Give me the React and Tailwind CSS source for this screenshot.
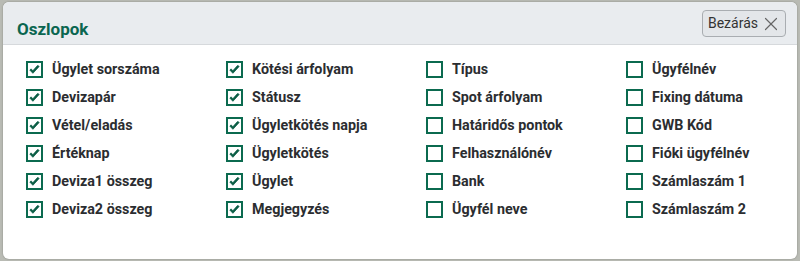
import { X } from 'lucide-react'

const columns = [
  [
    { label: 'Ügylet sorszáma', on: true },
    { label: 'Devizapár', on: true },
    { label: 'Vétel/eladás', on: true },
    { label: 'Értéknap', on: true },
    { label: 'Deviza1 összeg', on: true },
    { label: 'Deviza2 összeg', on: true },
  ],
  [
    { label: 'Kötési árfolyam', on: true },
    { label: 'Státusz', on: true },
    { label: 'Ügyletkötés napja', on: true },
    { label: 'Ügyletkötés', on: true },
    { label: 'Ügylet', on: true },
    { label: 'Megjegyzés', on: true },
  ],
  [
    { label: 'Típus', on: false },
    { label: 'Spot árfolyam', on: false },
    { label: 'Határidős pontok', on: false },
    { label: 'Felhasználónév', on: false },
    { label: 'Bank', on: false },
    { label: 'Ügyfél neve', on: false },
  ],
  [
    { label: 'Ügyfélnév', on: false },
    { label: 'Fixing dátuma', on: false },
    { label: 'GWB Kód', on: false },
    { label: 'Fióki ügyfélnév', on: false },
    { label: 'Számlaszám 1', on: false },
    { label: 'Számlaszám 2', on: false },
  ],
]

function Box({ on }) {
  return (
    <span className="w-[17px] h-[17px] border-2 border-[#0b6a4f] bg-white flex items-center justify-center shrink-0">
      {on && (
        <svg width="11" height="10" viewBox="0 0 11 10">
          <path d="M0.8 5 L3.9 8.3 L10.2 1.4 L8.6 0.4 L3.8 5.8 L2.2 3.9 Z" fill="#0b5e46" stroke="#0b5e46" strokeWidth="0.8" strokeLinejoin="round" />
        </svg>
      )}
    </span>
  )
}

export default function App() {
  return (
    <div className="w-[800px] h-[261px] bg-[#b9bbb4] p-[2px] pl-[3px] pr-[3px] pb-[2px] font-['Roboto',sans-serif]">
      <div className="h-full bg-white rounded-[6px] overflow-hidden flex flex-col shadow-[0_0_2px_rgba(0,0,0,0.3)]">
        {/* Header */}
        <div className="h-[43px] shrink-0 bg-[#e9ecef] border-b border-[#d6d9dc] flex items-start justify-between pl-[14px] pr-[11px]">
          <h2 className="text-[17px] leading-[24px] font-bold text-[#0a6650] mt-[15px]">Oszlopok</h2>
          <button className="h-[27px] flex items-center gap-[2px] pl-[5px] pr-[3px] rounded-[4px] border border-[#a9adb1] bg-[#e3e6e9] text-[14px] text-[#333] mt-[8px]">
            Bezárás
            <X size={22} strokeWidth={1.3} className="text-[#666]" />
          </button>
        </div>

        {/* Body */}
        <div className="grid grid-cols-[200px_200px_200px_200px] pl-[23px] pt-[16px]">
          {columns.map((col, ci) => (
            <div key={ci} className="flex flex-col gap-[11px]">
              {col.map(item => (
                <label key={item.label} className="flex items-center gap-[9px] h-[17px]">
                  <Box on={item.on} />
                  <span className="text-[14.3px] font-bold text-[#2b2d30] whitespace-nowrap">{item.label}</span>
                </label>
              ))}
            </div>
          ))}
        </div>
      </div>
    </div>
  )
}
